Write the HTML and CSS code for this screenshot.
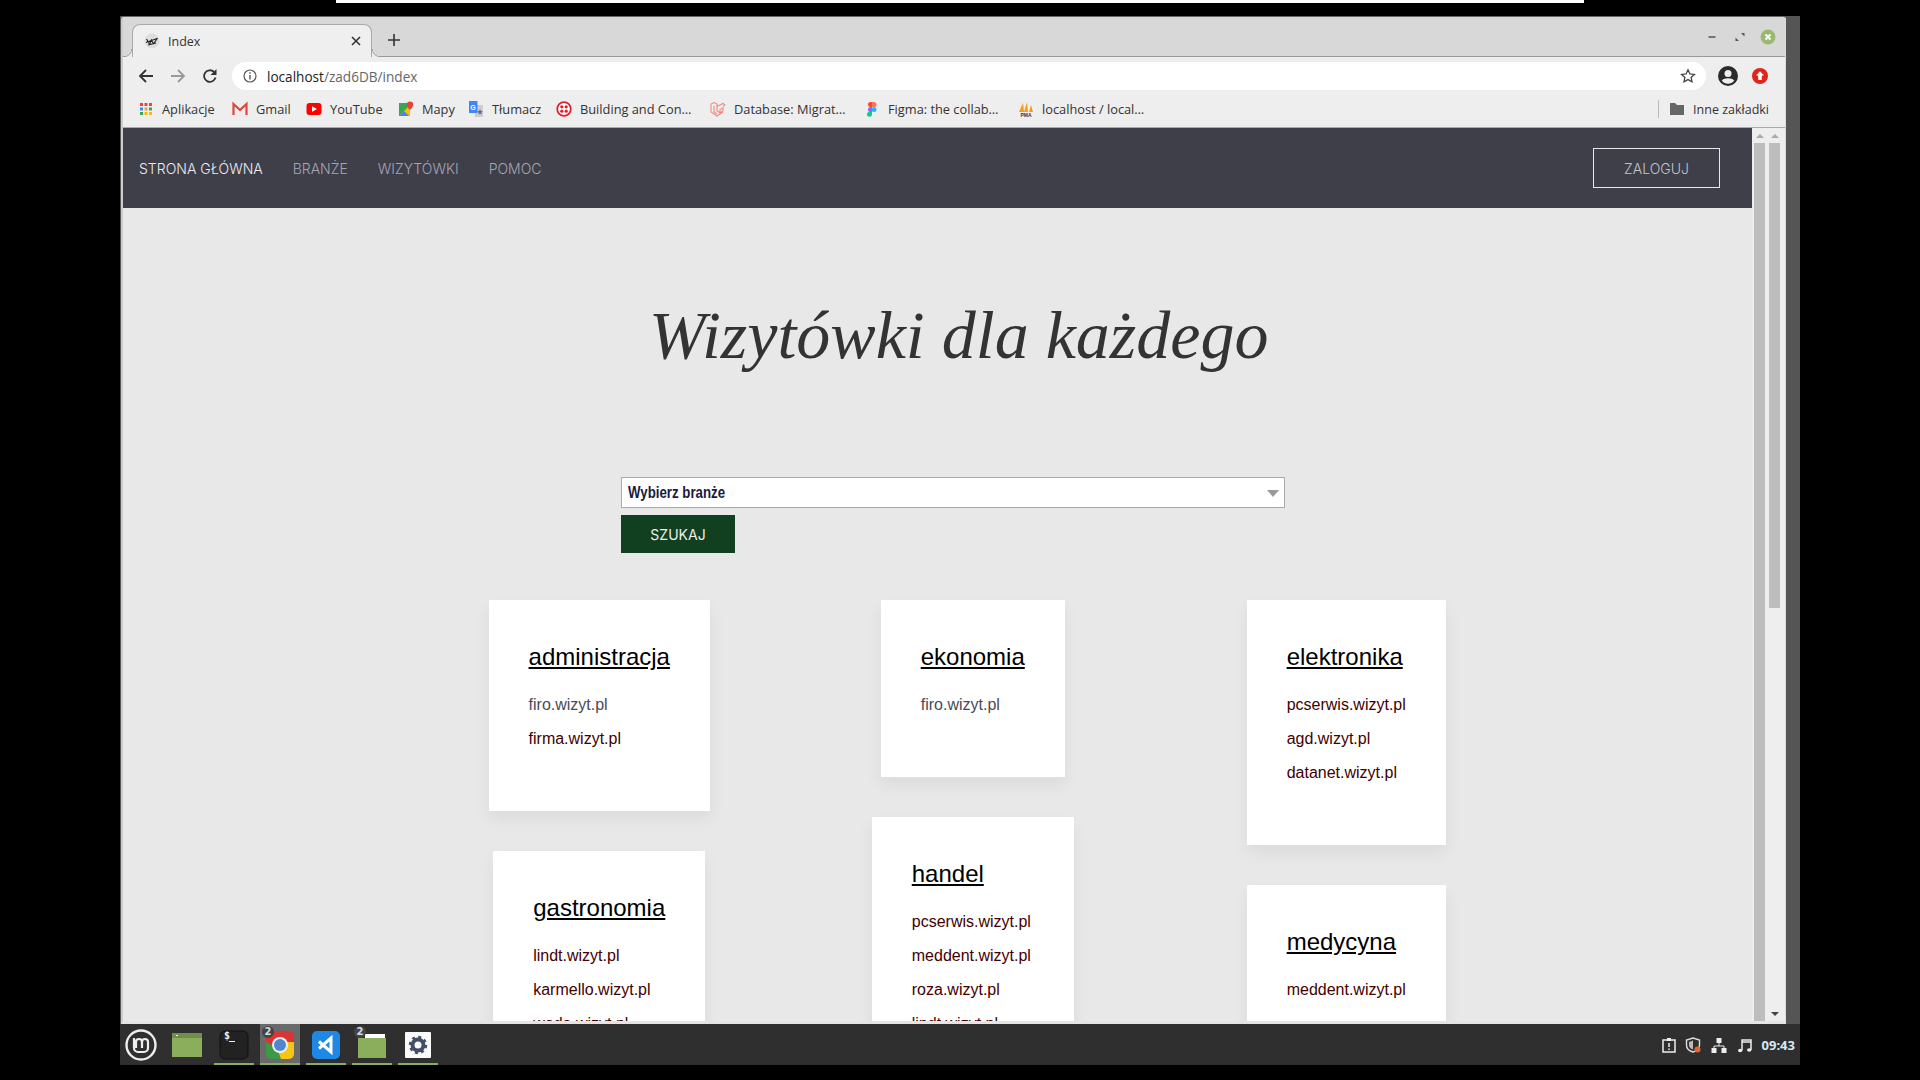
FILE: index.html
```html
<!DOCTYPE html>
<html lang="pl">

<head>
    <meta charset="UTF-8">
    <title>Index</title>
    <link rel="stylesheet" href="styles.css">
</head>

<body>
    <div class="topstrip"></div>
    <div class="desktop">
        <div class="window">
            <div class="tabstrip">
                <div class="tab">
                    <svg class="fav" viewBox="0 0 16 16"><circle cx="8" cy="8" r="7.5" fill="#ddd"/><path d="M2.500 6l3 5 2-4 2 4 4-6M2 9.500l11-4M4 12l8-2" fill="none" stroke="#222" stroke-width="1.100"/></svg>
                    <span class="tabtitle">Index</span>
                    <svg class="tabclose" viewBox="0 0 10 10"><path d="M1 1l8 8M9 1l-8 8" stroke="#333" stroke-width="1.6"/></svg>
                </div>
                <svg class="newtab" viewBox="0 0 12 12"><path d="M6 0v12M0 6h12" stroke="#333" stroke-width="1.6"/></svg>
                <div class="wincontrols">
                    <svg class="winbtn" viewBox="0 0 16 16"><path d="M4.500 8h7" stroke="#555" stroke-width="1.600"/></svg>
                    <svg class="winbtn" viewBox="0 0 16 16"><path d="M9 4h3.500v3.500zM7 12H3.500V8.500z" fill="#555"/></svg>
                    <svg class="winbtn" viewBox="0 0 16 16"><circle cx="8" cy="8" r="7.500" fill="#9ab96f"/><path d="M5.500 5.500l5 5M10.500 5.500l-5 5" stroke="#fff" stroke-width="2"/></svg>
                </div>
            </div>
            <div class="toolbar">
                <svg class="navicon" viewBox="0 0 16 16"><path d="M15 8H2M8 2L2 8l6 6" fill="none" stroke="#333" stroke-width="1.800"/></svg>
                <svg class="navicon" viewBox="0 0 16 16"><path d="M1 8h13M8 2l6 6-6 6" fill="none" stroke="#999" stroke-width="1.800"/></svg>
                <svg class="navicon" viewBox="0 0 16 16"><path d="M13.500 9.500A5.800 5.800 0 1 1 12 4" fill="none" stroke="#333" stroke-width="1.800"/><path d="M14.500 1v6h-6z" fill="#333"/></svg>
                <div class="omnibox">
                    <svg class="infoicon" viewBox="0 0 14 14"><circle cx="7" cy="7" r="6" fill="none" stroke="#555" stroke-width="1.200"/><path d="M7 6v4.500M7 3.300v1.500" stroke="#555" stroke-width="1.400"/></svg>
                    <span class="url">localhost<span class="urlpath">/zad6DB/index</span></span>
                    <svg class="staricon" viewBox="0 0 16 16"><path d="M8 1.800l1.900 4.100 4.500.5-3.300 3 .9 4.400L8 11.600l-4 2.200.9-4.400-3.300-3 4.500-.5z" fill="none" stroke="#444" stroke-width="1.300"/></svg>
                </div>
                <svg class="profile" viewBox="0 0 20 20"><circle cx="10" cy="10" r="10" fill="#2b2b2b"/><circle cx="10" cy="7.500" r="3.500" fill="#eee"/><path d="M3.800 14.500c2-3 10.400-3 12.400 0-1.500 2.200-3.800 3.300-6.200 3.300s-4.700-1.100-6.200-3.300z" fill="#eee"/></svg>
                <svg class="update" viewBox="0 0 16 16"><circle cx="8" cy="8" r="8" fill="#e0251b"/><path d="M8 3.300l4 4.200H9.800v4.500H6.200V7.500H4z" fill="#fff"/></svg>
            </div>
            <div class="bookmarks">
                <a class="bm">
                    <svg class="bmicon" viewBox="0 0 16 16">
                        <rect x="2" y="2" width="3" height="3" fill="#e8453c"/><rect x="6.500" y="2" width="3" height="3" fill="#e8453c"/><rect x="11" y="2" width="3" height="3" fill="#e8453c"/>
                        <rect x="2" y="6.500" width="3" height="3" fill="#4285f4"/><rect x="6.500" y="6.500" width="3" height="3" fill="#e8a33c"/><rect x="11" y="6.500" width="3" height="3" fill="#34a853"/>
                        <rect x="2" y="11" width="3" height="3" fill="#34a853"/><rect x="6.500" y="11" width="3" height="3" fill="#fbbc05"/><rect x="11" y="11" width="3" height="3" fill="#fbbc05"/>
                    </svg>Aplikacje</a>
                <a class="bm">
                    <svg class="bmicon" viewBox="0 0 16 14"><rect x="1" y="1" width="14" height="12" fill="#eee"/><path d="M1.500 13V2l6.500 6 6.500-6v11" fill="none" stroke="#d9483b" stroke-width="2.200"/></svg>Gmail</a>
                <a class="bm">
                    <svg class="bmicon" viewBox="0 0 16 14"><rect x="0.500" y="1" width="15" height="12" rx="3" fill="#f00"/><path d="M6 4.300v5.400L11 7z" fill="#fff"/></svg>YouTube</a>
                <a class="bm">
                    <svg class="bmicon" viewBox="0 0 16 16"><path d="M1 2h11v13H1z" fill="#34a853"/><path d="M1 15L12 4v11z" fill="#fbbc05"/><path d="M1 15l5-5 5 5z" fill="#4285f4"/><path d="M12 .5a3.200 3.200 0 0 1 3.200 3.200C15.200 6 12 9 12 9S8.800 6 8.800 3.700A3.200 3.200 0 0 1 12 .5z" fill="#ea4335"/></svg>Mapy</a>
                <a class="bm">
                    <svg class="bmicon" viewBox="0 0 16 16"><path d="M7 4h8v12H7z" fill="#ccc"/><path d="M1 0h8.500v12H1z" fill="#4285f4"/><path d="M12 8l.8 2 2 .2-1.500 1.300.5 2-1.800-1-1.800 1 .5-2-1.500-1.300 2-.2z" fill="#667"/><text class="gletter" x="5" y="8.500" text-anchor="middle">G</text></svg>Tłumacz</a>
                <a class="bm">
                    <svg class="bmicon" viewBox="0 0 16 16"><circle cx="8" cy="8" r="6.800" fill="#fff" stroke="#e0202e" stroke-width="1.800"/><circle cx="5.800" cy="5.800" r="1.600" fill="#e0202e"/><circle cx="10.200" cy="5.800" r="1.600" fill="#e0202e"/><circle cx="5.800" cy="10.200" r="1.600" fill="#e0202e"/><circle cx="10.200" cy="10.200" r="1.600" fill="#e0202e"/></svg>Building and Con…</a>
                <a class="bm">
                    <svg class="bmicon" viewBox="0 0 16 16"><path d="M1 3l3-1.500L7 3v7l3 1.800 3-1.800V7l-3 1.500V11M7 5.500l3-1.500 3-1.500 2 1.500-2 1.500M1 3v8l6 4 6-4M4 5v6l3 2" fill="none" stroke="#ef8c83" stroke-width="1.100"/></svg>Database: Migrat…</a>
                <a class="bm">
                    <svg class="bmicon" viewBox="0 0 16 16"><path d="M4 1h4v5H6.500a2.500 2.500 0 0 1 0-5z" fill="#f24e1e"/><path d="M8 1h2a2.500 2.500 0 0 1 0 5H8z" fill="#ff7262"/><path d="M4 6h4v5H6.500a2.500 2.500 0 0 1 0-5z" fill="#a259ff"/><circle cx="10" cy="8.500" r="2.500" fill="#1abcfe"/><path d="M6.500 11H8v2.500A2.500 2.500 0 1 1 6.500 11z" fill="#0acf83"/></svg>Figma: the collab…</a>
                <a class="bm">
                    <svg class="bmicon" viewBox="0 0 16 16"><path d="M1 11L5 2l1 9zM6 11l3-10 1 10zM11 11l2-7 2 7z" fill="#f29b1d"/><text class="pma" x="8" y="15.500" text-anchor="middle">PMA</text></svg>localhost / local…</a>
                <div class="bmright">
                    <svg class="foldericon" viewBox="0 0 14 12"><path d="M0 0h5l2 2h7v10H0z" fill="#666"/></svg>Inne zakładki
                </div>
            </div>
            <div class="viewport">
                <div class="page">
                    <nav class="topnav">
                        <a class="navlink active">STRONA GŁÓWNA</a>
                        <a class="navlink">BRANŻE</a>
                        <a class="navlink">WIZYTÓWKI</a>
                        <a class="navlink">POMOC</a>
                        <a class="loginbtn">ZALOGUJ</a>
                    </nav>
                    <h1 class="hero">Wizytówki dla każdego</h1>
                    <form class="search">
                        <div class="selectbox"><span class="selecttext">Wybierz branże</span><span class="caret"></span></div>
                        <button class="searchbtn" type="button">SZUKAJ</button>
                    </form>
                    <div class="cards">
                        <div class="col">
                            <div class="card">
                                <a class="cardtitle">administracja</a>
                                <a class="cardlink seen">firo.wizyt.pl</a>
                                <a class="cardlink">firma.wizyt.pl</a>
                            </div>
                            <div class="card">
                                <a class="cardtitle">gastronomia</a>
                                <a class="cardlink">lindt.wizyt.pl</a>
                                <a class="cardlink">karmello.wizyt.pl</a>
                                <a class="cardlink">woda.wizyt.pl</a>
                            </div>
                        </div>
                        <div class="col">
                            <div class="card">
                                <a class="cardtitle">ekonomia</a>
                                <a class="cardlink seen">firo.wizyt.pl</a>
                            </div>
                            <div class="card wide">
                                <a class="cardtitle">handel</a>
                                <a class="cardlink">pcserwis.wizyt.pl</a>
                                <a class="cardlink">meddent.wizyt.pl</a>
                                <a class="cardlink">roza.wizyt.pl</a>
                                <a class="cardlink">lindt.wizyt.pl</a>
                            </div>
                        </div>
                        <div class="col">
                            <div class="card">
                                <a class="cardtitle">elektronika</a>
                                <a class="cardlink">pcserwis.wizyt.pl</a>
                                <a class="cardlink">agd.wizyt.pl</a>
                                <a class="cardlink">datanet.wizyt.pl</a>
                            </div>
                            <div class="card">
                                <a class="cardtitle">medycyna</a>
                                <a class="cardlink">meddent.wizyt.pl</a>
                            </div>
                        </div>
                    </div>
                </div>
                <div class="scrollbar inner"><span class="arrow up"></span><span class="thumb"></span></div>
                <div class="scrollbar outer"><span class="arrow up"></span><span class="thumb"></span><span class="arrow down"></span></div>
            </div>
        </div>
        <div class="panel">
            <svg class="mintlogo" viewBox="0 0 32 32"><circle cx="16" cy="16" r="14.500" fill="none" stroke="#eee" stroke-width="2.400"/><path d="M9 9v10a4 4 0 0 0 4 4h6a4 4 0 0 0 4-4v-6a3 3 0 0 0-6 0v6M17 13a3 3 0 0 0-6 0v6" fill="none" stroke="#eee" stroke-width="2.200"/></svg>
            <div class="launcher plain">
                <svg class="appicon" viewBox="0 0 30 24"><rect width="30" height="24" fill="#8aae5b"/><rect width="30" height="5" fill="#6f8f48"/><rect x="4" y="2" width="2" height="1" fill="#fff"/></svg>
            </div>
            <div class="launcher running">
                <svg class="appicon" viewBox="0 0 30 30"><rect x="1" y="1" width="28" height="28" rx="5" fill="#222" stroke="#111"/><path d="M10 11.500h6" stroke="#eee" stroke-width="1"/></svg>
                <span class="termtext">$</span>
            </div>
            <div class="launcher running current">
                <svg class="appicon" viewBox="0 0 30 30"><rect x="1" y="1" width="28" height="28" rx="5" fill="#d33"/><path d="M1 18L11 29h13a5 5 0 0 0 5-5v-12H15z" fill="#f5c518"/><path d="M1 12v12a5 5 0 0 0 5 5h10L12 18z" fill="#3a9a48"/><circle cx="15" cy="15" r="8" fill="#eee"/><circle cx="15" cy="15" r="6" fill="#4f86d0"/></svg>
                <span class="appbadge">2</span>
            </div>
            <div class="launcher running">
                <svg class="appicon" viewBox="0 0 30 30"><rect x="1" y="1" width="28" height="28" rx="5" fill="#1e88e5"/><path d="M8 11.500l12 10.500V8L8 18.500" fill="none" stroke="#fff" stroke-width="3"/></svg>
            </div>
            <div class="launcher running">
                <svg class="appicon" viewBox="0 0 30 30"><path d="M8 4h20v4H8z" fill="#fff"/><path d="M1 8h28v20H1z" fill="#8aae5b"/></svg>
                <span class="appbadge">2</span>
            </div>
            <div class="launcher running">
                <svg class="appicon" viewBox="0 0 30 30"><rect x="2" y="2" width="26" height="26" rx="1" fill="#fafafa"/><circle cx="15" cy="15" r="5.500" fill="none" stroke="#444f66" stroke-width="4"/><circle cx="15" cy="15" r="8" fill="none" stroke="#444f66" stroke-width="2.500" stroke-dasharray="3 3.280"/></svg>
            </div>
            <div class="tray">
                <svg class="trayicon first" viewBox="0 0 16 16"><path d="M2 3h12v12H2z" fill="none" stroke="#eee" stroke-width="1.500"/><rect x="6" y="1" width="4" height="3" fill="#eee"/><path d="M8 6v4M8 11.500v1.500" stroke="#eee" stroke-width="1.500"/></svg>
                <svg class="trayicon" viewBox="0 0 16 16"><path d="M8 1l6.500 2v5c0 3.500-3 6-6.500 7-3.500-1-6.500-3.500-6.500-7V3z" fill="none" stroke="#ddd" stroke-width="1.400"/><path d="M8 3.500v9C5.500 11.500 4 10 4 8V5z" fill="#bbb"/><circle cx="12.500" cy="12.500" r="3" fill="#e8652d"/></svg>
                <svg class="trayicon" viewBox="0 0 16 16"><path d="M5.500 1h5v5h-5zM0.500 11h5v5h-5zM10.500 11h5v5h-5z" fill="#eee"/><path d="M8 6v3M3 11V9h10v2" fill="none" stroke="#eee"/></svg>
                <svg class="trayicon" viewBox="0 0 16 16"><path d="M5 13V3h9v10M5 5h9" fill="none" stroke="#eee" stroke-width="1.500"/><ellipse cx="3.200" cy="13.500" rx="2.200" ry="1.700" fill="#eee"/><ellipse cx="12.200" cy="13" rx="2.200" ry="1.700" fill="#eee"/></svg>
                <span class="clock">09:43</span>
            </div>
        </div>
    </div>
</body>

</html>
```

FILE: styles.css
```css
* {
    margin: 0;
    padding: 0;
    box-sizing: border-box;
}

html,
body {
    width: 1920px;
    height: 1080px;
    overflow: hidden;
    background: #000;
}

body {
    font-family: "Liberation Sans", Arial, sans-serif;
}

.topstrip {
    width: 1248px;
    height: 3px;
    margin-left: 336px;
    background: #fff;
}

.desktop {
    width: 1680px;
    height: 1049px;
    margin: 13px 0 0 120px;
    background: #555;
    display: flex;
    flex-direction: column;
}

.window {
    width: 1665px;
    height: 1008px;
    margin-left: 1px;
    border-radius: 4px 4px 0 0;
    background: #eee;
    border-top: 1px solid #666;
    border-left: 2px solid #ccc;
    border-right: 1px solid #ddd;
    border-bottom: 3px solid #e4e4e4;
    display: flex;
    flex-direction: column;
    overflow: hidden;
    font-family: "Open Sans", sans-serif;
    color: #333;
}

.tabstrip {
    height: 40px;
    flex: none;
    background: #d8d8d8;
    border-bottom: 1px solid #999;
    display: flex;
    align-items: flex-end;
    padding-left: 9px;
}

.tab {
    width: 240px;
    height: 33px;
    margin-bottom: -1px;
    background: #efefef;
    border: 1px solid #aaa;
    border-bottom: 0;
    border-radius: 8px 8px 0 0;
    display: flex;
    align-items: center;
    padding: 0 10px 0 11px;
    font-size: 12.500px;
    position: relative;
}

.tab::before,
.tab::after {
    content: "";
    position: absolute;
    bottom: 0;
    width: 8px;
    height: 8px;
}

.tab::before {
    left: -9px;
    background: radial-gradient(circle at 0 0, transparent 7px, #999 7.500px, #efefef 8.500px);
}

.tab::after {
    right: -9px;
    background: radial-gradient(circle at 100% 0, transparent 7px, #999 7.500px, #efefef 8.500px);
}

.fav {
    width: 16px;
    height: 16px;
    margin-right: 8px;
}

.tabtitle {
    flex: 1;
}

.tabclose {
    width: 10px;
    height: 10px;
}

.newtab {
    width: 12px;
    height: 12px;
    margin: 0 0 10px 16px;
}

.wincontrols {
    margin-left: auto;
    align-self: flex-start;
    display: flex;
    gap: 12px;
    padding: 12px 9px 0 0;
}

.winbtn {
    width: 16px;
    height: 16px;
}

.toolbar {
    height: 34px;
    flex: none;
    background: #eee;
    display: flex;
    align-items: center;
    padding: 4px 0 0 15px;
}

.navicon {
    width: 16px;
    height: 16px;
    margin-right: 16px;
}

.omnibox {
    width: 1474px;
    height: 28px;
    margin-left: -2px;
    border-radius: 14px;
    background: #fff;
    display: flex;
    align-items: center;
    padding: 0 10px 0 11px;
    font-size: 13.600px;
}

.infoicon {
    width: 14px;
    height: 14px;
    margin-right: 10px;
}

.url {
    flex: 1;
    color: #222;
}

.urlpath {
    color: #666;
}

.staricon {
    width: 16px;
    height: 16px;
}

.profile {
    width: 20px;
    height: 20px;
    margin-left: 12px;
}

.update {
    width: 16px;
    height: 16px;
    margin-left: 14px;
}

.bookmarks {
    height: 37px;
    flex: none;
    background: #eee;
    border-bottom: 1px solid #aaa;
    display: flex;
    align-items: center;
    padding-left: 15px;
    font-size: 12.800px;
}

.bm {
    flex: none;
    display: flex;
    align-items: center;
    color: #333;
    white-space: nowrap;
}

.bm:nth-child(1) { width: 94px; }
.bm:nth-child(2) { width: 74px; }
.bm:nth-child(3) { width: 92px; }
.bm:nth-child(4) { width: 70px; }
.bm:nth-child(5) { width: 88px; }
.bm:nth-child(6) { width: 154px; }
.bm:nth-child(7) { width: 154px; }
.bm:nth-child(8) { width: 154px; }

.bmicon {
    flex: none;
    width: 16px;
    height: 16px;
    margin-right: 8px;
}

.pma {
    font: bold 5px "Liberation Sans", sans-serif;
    fill: #335;
}

.gletter {
    font: bold 7px "Liberation Sans", sans-serif;
    fill: #fff;
}

.bmright {
    margin-left: auto;
    height: 18px;
    border-left: 1px solid #bbb;
    display: flex;
    align-items: center;
    padding: 0 16px 0 11px;
    font-size: 12.500px;
}

.foldericon {
    width: 14px;
    height: 12px;
    margin-right: 9px;
}

.viewport {
    flex: 1;
    min-height: 0;
    display: flex;
}

.page {
    width: 1629px;
    flex: none;
    background: #e8e8e8;
    overflow: hidden;
    font-family: "Liberation Sans", Arial, sans-serif;
}

.scrollbar {
    flex: none;
    background: #eee;
    display: flex;
    flex-direction: column;
    align-items: stretch;
}

.scrollbar.inner {
    width: 15px;
    padding: 0 2px;
}

.scrollbar.outer {
    width: 17px;
    padding: 0 4px 0 2px;
}

.arrow {
    height: 15px;
    flex: none;
    position: relative;
}

.arrow::after {
    content: "";
    position: absolute;
    left: 2px;
    border-left: 4px solid transparent;
    border-right: 4px solid transparent;
}

.arrow.up::after {
    top: 6px;
    border-bottom: 4px solid #aaa;
}

.arrow.down::after {
    top: 6px;
    border-top: 4px solid #444;
}

.thumb {
    display: block;
    background: #bdbdbd;
}

.inner .thumb {
    flex: 1;
}

.outer .thumb {
    height: 465px;
}

.outer .arrow.down {
    margin-top: auto;
}

.topnav {
    height: 80px;
    background: #3f3f4a;
    display: flex;
    align-items: center;
    padding: 0 32px 0 16px;
    font-family: Inter, sans-serif;
    font-size: 14px;
    font-weight: 300;
}

.navlink {
    margin-right: 30px;
    color: #a5a5b4;
}

.navlink.active {
    color: #ececf0;
}

.loginbtn {
    margin-left: auto;
    width: 127px;
    height: 40px;
    border: 1px solid #e8e8e8;
    display: flex;
    align-items: center;
    justify-content: center;
    color: #c4c4cc;
}

.hero {
    margin: 67px 0 0 526px;
    font-family: "Liberation Serif", serif;
    font-style: italic;
    font-weight: 400;
    font-size: 68px;
    line-height: 120px;
    color: #333;
}

.search {
    width: 664px;
    margin: 82px 0 0 498px;
}

.selectbox {
    height: 31px;
    background: #fff;
    border: 1px solid #aaa;
    display: flex;
    align-items: center;
    padding-left: 6px;
    position: relative;
}

.selecttext {
    display: inline-block;
    transform: scaleX(0.78);
    transform-origin: left center;
    font-weight: 700;
    font-size: 17px;
    color: #1a1a40;
    white-space: nowrap;
}

.caret {
    position: absolute;
    right: 5px;
    top: 12px;
    border-left: 6px solid transparent;
    border-right: 6px solid transparent;
    border-top: 7px solid #999;
}

.searchbtn {
    display: block;
    width: 114px;
    height: 38px;
    margin-top: 7px;
    border: 0;
    background: #104020;
    color: #eee;
    font-family: Inter, sans-serif;
    font-size: 14px;
    font-weight: 400;
}

.cards {
    width: 1120.500px;
    margin: 47px 0 0 289.500px;
    display: grid;
    grid-template-columns: repeat(3, 1fr);
}

.col {
    display: flex;
    flex-direction: column;
    align-items: center;
}

.card {
    padding: 41px 40px 47px;
    margin-bottom: 40px;
    background: #fff;
    box-shadow: 0 8px 16px rgba(0, 0, 0, 0.06);
    display: flex;
    flex-direction: column;
    align-items: flex-start;
}

.card.wide {
    min-width: 202px;
}

.cardtitle {
    font-size: 24px;
    line-height: 32px;
    color: #000;
    text-decoration: underline;
    margin-bottom: 23px;
}

.cardlink {
    font-size: 16px;
    line-height: 18px;
    color: #400;
    margin-bottom: 16px;
}

.cardlink.seen {
    color: #4a4a58;
}

.panel {
    height: 41px;
    flex: none;
    background: #2f2f2f;
    display: flex;
    align-items: center;
    padding-left: 5px;
}

.mintlogo {
    width: 32px;
    height: 32px;
    margin-right: 11px;
}

.launcher {
    width: 40px;
    height: 41px;
    margin-right: 6px;
    position: relative;
    display: flex;
    align-items: center;
    justify-content: center;
}

.launcher.plain .appicon {
    margin-right: 2px;
}

.launcher.running {
    border-bottom: 2px solid #8aae5b;
    padding-top: 2px;
}

.launcher.current {
    background: #6a6a6a;
}

.appicon {
    width: 30px;
    height: 30px;
}

.termtext {
    position: absolute;
    left: 10px;
    top: 6px;
    font: bold 10px "DejaVu Sans Mono", monospace;
    color: #eee;
}

.appbadge {
    position: absolute;
    left: 2px;
    top: 2px;
    width: 12px;
    height: 12px;
    border-radius: 50%;
    background: #444;
    color: #cde;
    font: bold 10px/12px "DejaVu Sans", sans-serif;
    text-align: center;
}

.tray {
    margin-left: auto;
    display: flex;
    align-items: center;
    gap: 10px;
    padding-right: 5px;
}

.trayicon {
    width: 16px;
    height: 16px;
}

.trayicon.first {
    margin-right: -2px;
}

.clock {
    margin-left: -1px;
    font: 700 13px "Open Sans", sans-serif;
    color: #d8e8f8;
}
```
